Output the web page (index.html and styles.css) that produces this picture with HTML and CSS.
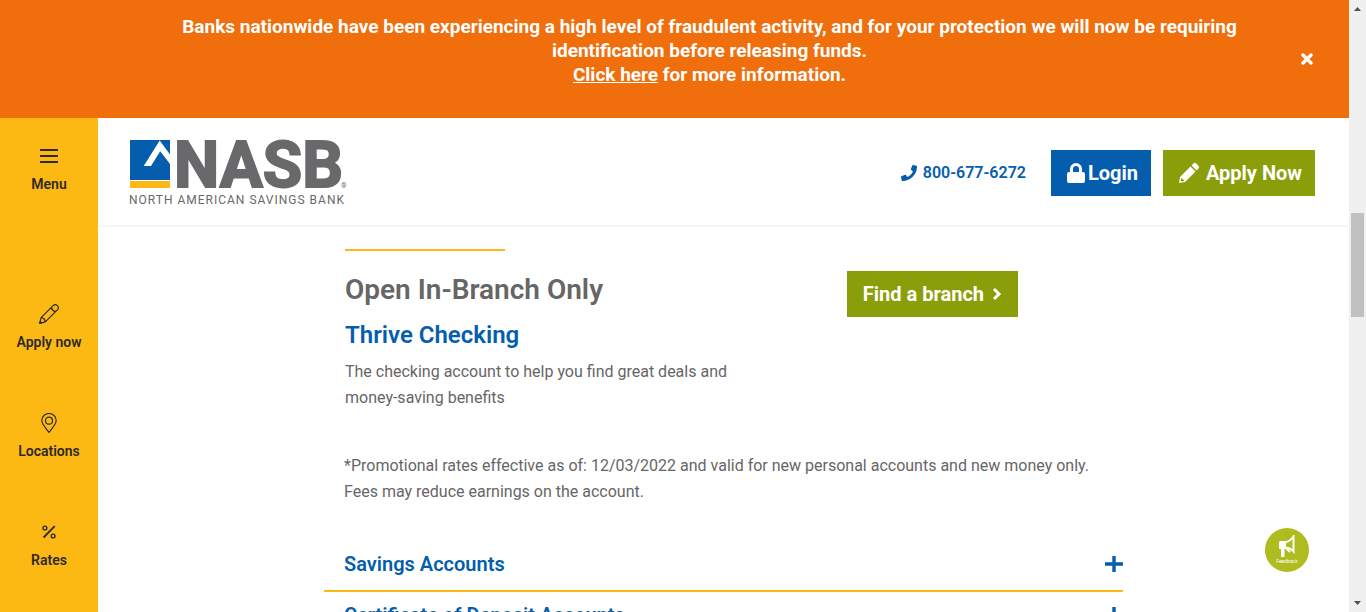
FILE: index.html
```html
<!DOCTYPE html>
<html lang="en">
<head>
<meta charset="utf-8">
<meta name="viewport" content="width=device-width, initial-scale=1">
<title>NASB Checking Accounts</title>
<link rel="stylesheet" href="styles.css">
</head>
<body>
<div class="window">
  <div class="page">
    <section class="alert">
      <p class="alert-text">Banks nationwide have been experiencing a high level of fraudulent activity, and for your protection we will now be requiring identification before releasing funds.<br><a href="#fraud">Click here</a> for more information.</p>
      <button class="alert-close" type="button" aria-label="Close alert">
        <svg width="12" height="12" viewBox="0 0 12 12"><path d="M2 2l8 8M10 2l-8 8" stroke="currentColor" stroke-width="3.4" stroke-linecap="round"/></svg>
      </button>
    </section>
    <div class="body">
      <nav class="sidebar" aria-label="Main">
        <button class="side-item side-menu" type="button">
          <svg width="20" height="20" viewBox="0 0 20 20"><path d="M1 4h18M1 10h18M1 16h18" stroke="currentColor" stroke-width="2"/></svg>
          <span>Menu</span>
        </button>
        <a class="side-item" href="#apply">
          <svg width="20" height="20" viewBox="0 0 20 20" fill="none" stroke="currentColor" stroke-width="1.2" stroke-linejoin="round"><path d="M.7 19.3l1.4-5.6L14.4 1.4a2.6 2.6 0 0 1 3.7 0l.5.5a2.6 2.6 0 0 1 0 3.7L6.3 17.9zM12.3 3.5c.6 2.200 2 3.600 4.200 4.200M2.100 13.700c2.200.2 3.900 1.900 4.200 4.200"/><path d="M.7 19.300l.5-2 1.500 1.500z" fill="currentColor"/></svg>
          <span>Apply now</span>
        </a>
        <a class="side-item" href="#locations">
          <svg width="20" height="20" viewBox="0 0 20 20" fill="none" stroke="currentColor" stroke-width="1.2"><path d="M10 19.400C6.500 14.400 2.800 11.200 2.800 7.500a7.200 7 0 0 1 14.400 0c0 3.700-3.700 6.900-7.200 11.900z"/><circle cx="10" cy="7.700" r="3.500"/></svg>
          <span>Locations</span>
        </a>
        <a class="side-item" href="#rates">
          <svg width="20" height="20" viewBox="0 0 20 20" fill="none" stroke="currentColor" stroke-width="1.400"><path d="M4.600 15.500L15.700 4.200" stroke-width="1.800"/><circle cx="5.900" cy="6" r="1.900"/><circle cx="14.100" cy="14" r="1.900"/></svg>
          <span>Rates</span>
        </a>
      </nav>
      <div class="content">
        <header class="header">
          <a class="logo" href="#home" aria-label="North American Savings Bank">
            <svg width="218" height="69" viewBox="0 0 218 69">
              <path d="M1 2h40v40H1z" fill="#045ead"/>
              <path d="M1 43h40v7H1z" fill="#fdb913"/>
              <path d="M14.700 28L30.700 2.500 41 16.500V26L31.200 13.200 22 28z" fill="#fff"/>
              <text class="logo-name" x="45" y="49">NASB</text>
              <text class="logo-mark" x="212" y="50">®</text>
              <text class="logo-sub" x="0" y="66">NORTH AMERICAN SAVINGS BANK</text>
            </svg>
          </a>
          <a class="phone" href="tel:8006776272">
            <svg width="16" height="16" viewBox="0 0 512 512"><path fill="currentColor" d="M493 25L389 1c-11-3-23 3-27 14l-48 112c-4 10-1 21 7 28l61 50c-36 77-99 140-178 178l-50-61c-7-8-18-11-28-7L14 363c-11 4-17 16-14 27l24 104c3 11 12 18 24 18 256 0 464-208 464-464 0-11-8-21-19-23z"/></svg>
            800-677-6272</a>
          <a class="button login" href="#login">
            <svg width="18" height="20" viewBox="0 0 18 20"><path fill="currentColor" fill-rule="evenodd" d="M2 9h1V6a6 6 0 0 1 12 0v3h1a2 2 0 0 1 2 2v7a2 2 0 0 1-2 2H2a2 2 0 0 1-2-2v-7a2 2 0 0 1 2-2zm4 0h6V6a3 3 0 0 0-6 0z"/></svg>
            Login</a>
          <a class="button apply" href="#apply">
            <svg width="22" height="22" viewBox="0 0 22 22"><path fill="currentColor" fill-rule="evenodd" d="M1 21l1-6L12.500 4.500l5 5L7 20zM3.200 16.200l-.4 2.600.9.700 2.300-.5v-1.300l-1.400-.1-.1-1.400zM13.600 3.400l1.800-1.800a2 2 0 0 1 2.900 0l2.100 2.100a2 2 0 0 1 0 2.900l-1.800 1.800z"/></svg>
            Apply Now</a>
        </header>
        <main class="main">
          <section class="product">
            <div class="product-info">
              <h2>Open In-Branch Only</h2>
              <h3>Thrive Checking</h3>
              <p>The checking account to help you find great deals and money-saving benefits</p>
            </div>
            <a class="button branch" href="#branches">Find a branch
              <svg width="10" height="14" viewBox="0 0 10 14"><path d="M2 2l5 5-5 5" fill="none" stroke="currentColor" stroke-width="3"/></svg>
            </a>
          </section>
          <p class="note">*Promotional rates effective as of: 12/03/2022 and valid for new personal accounts and new money only. Fees may reduce earnings on the account.</p>
          <section class="accordion">
            <button class="accordion-item" type="button" aria-expanded="false">Savings Accounts
              <svg width="18" height="18" viewBox="0 0 18 18"><path d="M9 1v16M0 9h18" stroke="currentColor" stroke-width="3.400"/></svg>
            </button>
            <button class="accordion-item" type="button" aria-expanded="false">Certificate of Deposit Accounts
              <svg width="18" height="18" viewBox="0 0 18 18"><path d="M9 1v16M0 9h18" stroke="currentColor" stroke-width="3.400"/></svg>
            </button>
          </section>
        </main>
      </div>
    </div>
    <button class="feedback" type="button">
      <svg width="18" height="22" viewBox="0 0 18 22" fill="none" stroke="currentColor" stroke-width="2"><path d="M7 7.500C11 6.500 13.500 4.500 15.500 1.500v15C13.500 14 11 12.800 7 12.500z"/><path d="M2 6h6v8H6.500v8H3v-8H1V7z" fill="currentColor" stroke="none"/><path d="M8 13l4 4"/></svg>
      <span>Feedback</span>
    </button>
  </div>
  <div class="scrollbar" aria-hidden="true">
    <svg width="7" height="4" viewBox="0 0 7 4"><path d="M0 4l3.500-4L7 4z" fill="#505050"/></svg>
    <div class="thumb"></div>
    <svg class="arrow-down" width="7" height="4" viewBox="0 0 7 4"><path d="M0 0l3.500 4L7 0z" fill="#505050"/></svg>
  </div>
</div>
</body>
</html>
```
FILE: styles.css
```css
* { box-sizing: border-box; }
body { margin: 0; font-family: Roboto, "Liberation Sans", sans-serif; font-size: 16px; color: #666; background: #fff; }
h2, h3, p { margin: 0; }
a { color: inherit; text-decoration: none; }
button { font: inherit; color: inherit; border: 0; padding: 0; background: none; cursor: pointer; }
svg { display: block; flex: none; }

.window { display: flex; height: 100vh; overflow: hidden; }
.page { position: relative; flex: 1; min-width: 0; display: flex; flex-direction: column; overflow: hidden; }

.alert { display: flex; align-items: center; gap: 64px; padding: 15px 36px 31px 182px; background: #f16e0c; color: #fff; }
.alert-text { flex: 1; font-size: 19px; font-weight: 700; line-height: 24px; text-align: center; }
.alert-text a { text-decoration: underline; }
.alert-close { margin-top: 16px; }

.body { flex: 1; display: flex; min-height: 0; }
.sidebar { flex: none; width: 98px; display: flex; flex-direction: column; padding-top: 28px; background: #fdb913; color: #2d2a26; overflow: hidden; }
.side-item { flex: none; display: flex; flex-direction: column; align-items: center; gap: 10px; margin-bottom: 63px; font-size: 14px; font-weight: 600; line-height: 16px; }
.side-menu { margin-bottom: 112px; }

.content { flex: 1; min-width: 0; }
.header { display: flex; align-items: center; padding: 20px 34px 18px 31px; border-bottom: 2px solid #f6f6f6; }
.logo { margin-right: auto; }
.logo-name { font-size: 64px; font-weight: 700; fill: #69696c; stroke: #69696c; stroke-width: 2px; }
.logo-mark { font-size: 7px; fill: #69696c; }
.logo-sub { font-size: 12px; font-weight: 400; letter-spacing: 1px; fill: #69696c; }
.phone { display: flex; align-items: center; gap: 6px; margin-right: 25px; color: #045ead; font-weight: 600; }
.button { display: flex; align-items: center; height: 46px; padding: 0 13px 0 16px; color: #fff; font-size: 20px; font-weight: 700; white-space: nowrap; }
.login { gap: 3px; margin-right: 12px; background: #045ead; }
.apply { gap: 6px; padding-left: 15px; background: #8a9e0a; }

.main { max-width: 799px; margin: 0 auto; padding-top: 22px; }
.product { display: flex; justify-content: space-between; align-items: flex-start; padding: 0 105px 0 21px; }
.product-info { width: 400px; }
.product-info::before { content: ""; display: block; width: 160px; height: 2px; background: #fdb913; }
.product h2 { margin-top: 22px; font-size: 28px; font-weight: 600; line-height: 34px; }
.product h3 { margin-top: 14px; font-size: 24px; font-weight: 600; line-height: 28px; color: #045ead; }
.product p { margin-top: 10px; line-height: 26px; }
.branch { gap: 8px; margin-top: 22px; padding-right: 16px; background: #8a9e0a; }
.note { margin-top: 42px; padding: 0 20px; line-height: 26px; }
.accordion { margin-top: 36px; }
.accordion-item { display: flex; justify-content: space-between; align-items: center; width: 100%; padding: 11px 0 14px 20px; border-bottom: 2px solid #fdb913; color: #045ead; font-size: 20px; font-weight: 600; line-height: 24px; }

.feedback { position: absolute; right: 40px; bottom: 40px; width: 44px; height: 44px; display: flex; flex-direction: column; align-items: center; padding-top: 7px; border-radius: 50%; background: #afbc20; color: #fff; font-size: 5px; line-height: 8px; }

.scrollbar { flex: none; width: 17px; display: flex; flex-direction: column; align-items: center; padding: 7px 2px; background: #f0f0f0; }
.thumb { width: 13px; height: 17vh; margin-top: 33vh; background: #c0c0c0; }
.arrow-down { margin-top: auto; }
```
